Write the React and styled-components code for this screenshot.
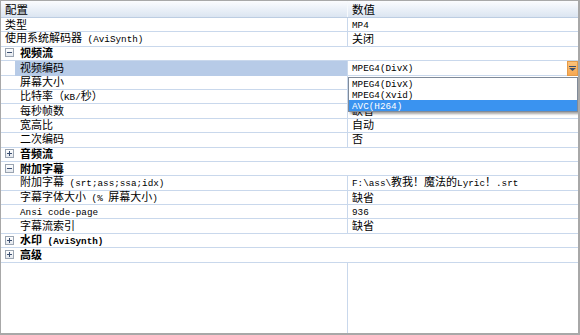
import styled, { createGlobalStyle } from 'styled-components';

const GlobalStyle = createGlobalStyle`
  html, body { margin: 0; padding: 0; background: #fff; }
  body { font-family: "Noto Sans CJK SC", sans-serif; }
`;

const LINE = '#c9d8ec';

const Frame = styled.div`
  width: 580px;
  height: 335px;
  box-sizing: border-box;
  border: 1px solid #a8a8a8;
  border-right-width: 2px;
  border-bottom-width: 2px;
  display: flex;
  flex-direction: column;
  background: #fff;
  overflow: hidden;
  font-family: "Noto Sans CJK SC", sans-serif;
  font-size: 11px;
  line-height: 12px;
  color: #000;
`;

const Header = styled.div`
  display: grid;
  grid-template-columns: 347px 1fr;
  height: 17px;
  flex: none;
  box-sizing: border-box;
  background: linear-gradient(#fbfcfe, #e9eff7 55%, #dbe5f1);
  border-bottom: 1px solid #bccde2;
`;

const HeadCell = styled.div`
  display: flex;
  align-items: center;
  padding: 0 0 1px 4px;
  font-size: 11.5px;
  border-right: ${(p) => (p.$last ? 'none' : '1px solid #f6f9fc')};
`;

const Row = styled.div`
  display: grid;
  grid-template-columns: 347px 1fr;
  height: 14.4px;
  flex: none;
  box-sizing: border-box;
  border-bottom: 1px solid ${LINE};
  position: relative;
`;

const NameCell = styled.div`
  display: flex;
  border-right: 1px solid ${LINE};
  min-width: 0;
`;

const Gutter = styled.div`
  width: 14px;
  flex: none;
`;

const Label = styled.div`
  flex: 1;
  display: flex;
  align-items: center;
  padding: 0 0 2px ${(p) => (p.$child ? '5px' : '4px')};
  background: ${(p) => (p.$selected ? '#b7cbe7' : 'transparent')};
  white-space: nowrap;
`;

const ValueCell = styled.div`
  display: flex;
  align-items: center;
  padding: 0 0 2px 4px;
  white-space: nowrap;
  position: relative;
`;

const CategoryRow = styled.div`
  display: flex;
  align-items: center;
  height: 14.4px;
  flex: none;
  box-sizing: border-box;
  border-bottom: 1px solid ${LINE};
  padding: 0 0 1px 4px;
  font-weight: bold;
  white-space: nowrap;
`;

const Expander = styled.span`
  width: 7px;
  height: 7px;
  border: 1px solid #9aa4b1;
  background: linear-gradient(#ffffff, #e4e8ee);
  position: relative;
  margin-right: 6px;
  flex: none;
  &::before {
    content: '';
    position: absolute;
    left: 1px;
    top: 3px;
    width: 5px;
    height: 1px;
    background: #3b4f70;
  }
  &::after {
    content: '';
    display: ${(p) => (p.$open ? 'none' : 'block')};
    position: absolute;
    left: 3px;
    top: 1px;
    width: 1px;
    height: 5px;
    background: #3b4f70;
  }
`;

const Filler = styled.div`
  flex: 1;
  display: grid;
  grid-template-columns: 347px 1fr;
`;

const FillCol = styled.div`
  border-right: 1px solid ${LINE};
`;

const Text = styled.span`
  display: block;
  line-height: 11px;
  white-space: pre;
`;

const Latin = styled.span`
  font-family: "Liberation Mono", monospace;
  font-size: 9.3px;
  line-height: 11px;
`;

const ComboButton = styled.div`
  position: absolute;
  right: 0;
  top: 0;
  bottom: 0;
  width: 11px;
  box-sizing: border-box;
  border: 1px solid #e59b48;
  background: linear-gradient(#fcc27a, #f7a851);
  display: flex;
  align-items: center;
  justify-content: center;
`;

const DropList = styled.div`
  position: absolute;
  left: 0;
  right: 0;
  top: 100%;
  margin-top: 1px;
  z-index: 5;
  background: #fff;
  border: 1px solid #7f8a99;
  box-shadow: 2px 2px 2px rgba(0, 0, 0, 0.35);
  display: flex;
  flex-direction: column;
`;

const DropItem = styled.div`
  height: 11px;
  display: flex;
  align-items: center;
  padding-left: 3px;
  background: ${(p) => (p.$active ? '#3a93f0' : 'transparent')};
  color: ${(p) => (p.$active ? '#fff' : '#000')};
`;

const Txt = ({ s }) => (
  <Text>
    {s
      .split(/([\x20-\x7e]+)/)
      .filter(Boolean)
      .map((part, i) =>
        /^[\x20-\x7e]/.test(part) ? <Latin key={i}>{part}</Latin> : <span key={i}>{part}</span>
      )}
  </Text>
);

const rows = [
  { name: '类型', value: 'MP4' },
  { name: '使用系统解码器 (AviSynth)', value: '关闭' },
  { cat: '视频流', open: true },
  { name: '视频编码', child: true, combo: true },
  { name: '屏幕大小', child: true, value: '' },
  { name: '比特率（KB/秒）', child: true, value: '' },
  { name: '每秒帧数', child: true, value: '缺省' },
  { name: '宽高比', child: true, value: '自动' },
  { name: '二次编码', child: true, value: '否' },
  { cat: '音频流' },
  { cat: '附加字幕', open: true },
  { name: '附加字幕 (srt;ass;ssa;idx)', child: true, value: 'F:\\ass\\教我！魔法的Lyric！.srt' },
  { name: '字幕字体大小 (% 屏幕大小)', child: true, value: '缺省' },
  { name: 'Ansi code-page', child: true, value: '936' },
  { name: '字幕流索引', child: true, value: '缺省' },
  { cat: '水印 (AviSynth)' },
  { cat: '高级' },
];

const options = ['MPEG4(DivX)', 'MPEG4(Xvid)', 'AVC(H264)'];

export default function App() {
  return (
    <>
      <GlobalStyle />
      <Frame>
        <Header>
          <HeadCell>配置</HeadCell>
          <HeadCell $last>数值</HeadCell>
        </Header>
        {rows.map((r, i) =>
          r.cat ? (
            <CategoryRow key={i}>
              <Expander $open={r.open} />
              <Txt s={r.cat} />
            </CategoryRow>
          ) : (
            <Row key={i} style={{ zIndex: r.combo ? 3 : 'auto' }}>
              <NameCell>
                {r.child && <Gutter />}
                <Label $child={r.child} $selected={r.combo}>
                  <Txt s={r.name} />
                </Label>
              </NameCell>
              <ValueCell>
                {r.combo ? (
                  <>
                    <Txt s="MPEG4(DivX)" />
                    <ComboButton>
                      <svg width="7" height="5" viewBox="0 0 7 5">
                        <rect x="0" y="0" width="7" height="1" fill="#3b4f70" />
                        <path d="M0 2 H7 L3.5 5 Z" fill="#3b4f70" />
                      </svg>
                    </ComboButton>
                    <DropList>
                      {options.map((o, j) => (
                        <DropItem key={o} $active={j === 2}>
                          <Txt s={o} />
                        </DropItem>
                      ))}
                    </DropList>
                  </>
                ) : (
                  <Txt s={r.value} />
                )}
              </ValueCell>
            </Row>
          )
        )}
        <Filler>
          <FillCol />
          <div />
        </Filler>
      </Frame>
    </>
  );
}
